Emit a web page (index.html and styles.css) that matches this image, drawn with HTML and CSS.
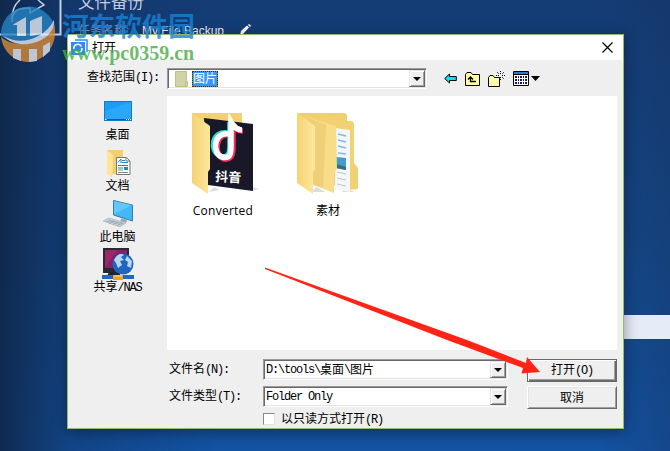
FILE: index.html
```html
<!DOCTYPE html>
<html lang="zh-CN">
<head>
    <meta charset="UTF-8">
    <meta name="viewport" content="width=device-width, initial-scale=1.0">
    <link rel="stylesheet" href="styles.css">
    <title>打开</title>
</head>
<body>
    <div class="app-header">
        <div class="app-icon">
            <svg width="62" height="36" viewBox="0 0 62 36" fill="none" stroke="#c3d0e2">
                <path d="M0 34.5H60.500V0" stroke-width="2"/>
                <path d="M12 22C12 11 17 8 30 8V13L44 5 38 0M20 0C15 4 12 9 12 19" stroke-width="1.5"/>
            </svg>
        </div>
        <div class="app-info">
            <div class="app-title">文件备份</div>
            <div class="task"><span class="task-label">任务名称:</span><span class="task-name">My File Backup</span>
                <svg class="pencil" width="11" height="11" viewBox="0 0 11 11"><path d="M0 11L1 7 7 1.500 9 3.500 3 10ZM8 1L9 0 11 1.500 10 3Z" fill="#fff"/></svg>
            </div>
        </div>
    </div>
    <div class="strip"></div>

    <div class="dialog">
        <div class="titlebar">
            <svg width="17" height="17" viewBox="0 0 17 17">
                <path d="M4 1H16V13" fill="none" stroke="#2d8cf0" stroke-width="1.5"/>
                <rect x="0" y="3" width="14" height="13" fill="#2d8cf0"/>
                <path d="M3 10A4 4 0 0 1 10.500 7.500M11 9A4 4 0 0 1 4 12" fill="none" stroke="#fff" stroke-width="1.500"/>
            </svg>
            <span class="title">打开</span>
            <svg class="close" width="11" height="11" viewBox="0 0 11 11"><path d="M.5.5L10.500 10.500M10.500.5L.5 10.500" stroke="#000" stroke-width="1.200"/></svg>
        </div>

        <div class="lookin">
            <span class="lookin-label">查找范围<span class="en">(I):</span></span>
            <div class="combo folder-combo">
                <svg width="13" height="16" viewBox="0 0 13 16"><path d="M.5.5H11.500V9.500L12.500 11V15.500H.5Z" fill="#d0d3a5" stroke="#c3c27c"/><path d="M10.500 15V10" stroke="#c3c27c"/></svg>
                <span class="selected">图片</span>
                <span class="drop"></span>
            </div>
            <div class="tools">
                <svg width="13" height="11" viewBox="0 0 13 11"><path d="M.7 5.500L5.500 1V3.500H12.300V7.500H5.500V10Z" fill="#00e5ee" stroke="#000"/></svg>
                <svg width="15" height="14" viewBox="0 0 15 14"><path d="M.5 13V2.500L2 .5H6L7.500 2.500H14.500V13.500H.5Z" fill="#ffffa5" stroke="#000"/><path d="M5.500 5V9.500H11M3 7.500L5.500 5 8 7.500" fill="none" stroke="#000" stroke-width="1.300"/></svg>
                <svg width="17" height="16" viewBox="0 0 17 16"><path d="M.5 15V6.500L2 4.500H5L6.500 6.500H11.500V15.500H.5Z" fill="#ffffa5" stroke="#000"/><path d="M12.500 0V3M12.500 6V9M8 4.500H11M14 4.500H17M9 1L11 3M14 6L16 8M16 1L14 3M11 6L10 7" stroke="#000" stroke-dasharray="1 1"/></svg>
                <svg width="27" height="15" viewBox="0 0 27 15"><path d="M.5.5H15.500V14.500H.5Z" fill="#fff" stroke="#000"/><path d="M1 2H15" stroke="#2d79cf" stroke-width="2"/><path d="M1 3.500H15" stroke="#000"/><path d="M2 6H14M2 9H14M2 12H14" stroke="#111a55" stroke-width="2" stroke-dasharray="2 1 1 1"/><path d="M18 5H27L22.500 10Z"/></svg>
            </div>
        </div>

        <div class="main">
            <div class="places">
                <div class="place">
                    <svg width="28" height="20" viewBox="0 0 28 20"><rect x=".5" y=".5" width="27" height="19" fill="#1b9cf5" stroke="#137bc4"/><path d="M1 18V10L27 1V18Z" fill="#35adff" opacity=".6"/><path d="M1 18.500H27" stroke="#075d99"/><path d="M1 18.500H2.500M22 18.500H23M24 18.500H25M26 18.500H27" stroke="#fff"/></svg>
                    <span>桌面</span>
                </div>
                <div class="place">
                    <svg width="28" height="27" viewBox="0 0 28 27"><path d="M3 0H19V24H3Z" fill="#f3cf70"/><path d="M3 0L9 5V15L8 27 3 24Z" fill="#ffe493"/><path d="M12.500 7.500H22.500L26 11V24.500H12.500Z" fill="#fff" stroke="#777"/><path d="M22 8V11H26" fill="none" stroke="#777"/><path d="M14 12.500L17 9V13M18 10.500H21M18 12.500H24M14 15.500H24M14 18H19" stroke="#2587bd" fill="none"/><path d="M14 20H19M14 22.500H24" stroke="#888"/><path d="M20 17H24V20H20Z" fill="#268ab6"/></svg>
                    <span>文档</span>
                </div>
                <div class="place">
                    <svg width="32" height="28" viewBox="0 0 32 28"><path d="M11.500.5L30.500 5V21L11.500 15Z" fill="#42b8f7" stroke="#347ea8"/><path d="M12 1L30 5 12 14Z" fill="#7ad1ff" opacity=".6"/><path d="M20 18L25 20 24 23 18 21Z" fill="#9caab5"/><path d="M1 21L7 18 24 23 18 27Z" fill="#ccd4db" stroke="#a6afb7" stroke-width=".6"/><path d="M4 21L20 25M6 20L22 24M7 24L12 20M11 25L16 21M15 26L20 22" stroke="#8f9aa3" stroke-width=".6"/></svg>
                    <span>此电脑</span>
                </div>
                <div class="place">
                    <svg width="32" height="32" viewBox="0 0 32 32"><path d="M1 0H27V25H1Z" fill="#292934"/><path d="M3 2H25V20H3Z" fill="#83206f"/><path d="M3 2H15L3 20Z" fill="#b3305d" opacity=".5"/><path d="M7 24H18V28H5Z" fill="#24252c"/><circle cx="21" cy="16" r="10.500" fill="#2165c0"/><path d="M12 12C15 6 19 5 22 7L19 9 22 12 18 13 20 17 16 20 14 15ZM25 8L30 13 29 20 25 18 26 14 23 12Z" fill="#b6d7f0"/><path d="M0 27H32V31H0Z" fill="#2169bf"/><path d="M11 27H21V32H11Z" fill="#eba51a"/><path d="M12 28H20" stroke="#ffe27b"/></svg>
                    <span>共享<span class="en">/NAS</span></span>
                </div>
            </div>

            <div class="files">
                <div class="file">
                    <svg width="68" height="84" viewBox="0 0 68 84">
                        <defs><linearGradient id="fold" x2="1"><stop stop-color="#f5d375"/><stop offset="1" stop-color="#ffe79d"/></linearGradient></defs>
                        <path d="M58 79L67 77 58 74Z" fill="#ddd"/><path d="M17 80L22 75 28 78Z" fill="#ddd"/>
                        <path d="M0 1H50V60H0Z" fill="#f3d071"/>
                        <path d="M12 6L61 12V79L16 73Z" fill="#181828"/>
                        <g fill="none" stroke-width="5.500">
                            <path d="M36 21C20 18 17 39 28 44C36 47 38 41 38 34V10C40 15 43 17 48 17" stroke="#25e0da"/>
                            <path d="M38 23C23 20 21 43 32 47C39 48 41 43 41 36V12C43 16 46 19 51 19" stroke="#f42e55"/>
                            <path d="M37 22C21 19 20 42 30 45C38 47 39 42 39 35V10C42 15 45 18 50 18" stroke="#fff"/>
                        </g>
                        <text class="cover" x="23" y="69" transform="rotate(3 23 69)">抖音</text>
                        <path d="M0 1L18 14V57L16 60V82L0 71Z" fill="url(#fold)"/>
                    </svg>
                    <span class="file-name latin">Converted</span>
                </div>
                <div class="file">
                    <svg width="68" height="84" viewBox="0 0 68 84">
                        <path d="M13 80L20 75 28 80ZM45 80L49 75 57 80Z" fill="#ddd"/>
                        <path d="M0 1H48L50 3V70H0Z" fill="#efcf70"/><path d="M10 5L49 9H55L57 11V51L61 56V77L49 78 12 64Z" fill="#f1d171"/>
                        <path d="M38 16L53 18V80L38 77Z" fill="#f4f6f8"/>
                        <path d="M41 22L49 24M41 28L49 30M41 34L49 36M41 41L49 42" stroke="#79bfe7" stroke-width="1.500"/><path d="M39 45L49 46V58L39 56Z" fill="#449ccc"/><path d="M39 52L49 55V58L39 56Z" fill="#376e73"/><path d="M40 60L49 62M40 66L49 68M40 72L49 74" stroke="#bcc4cb"/>
                        <path d="M7 4L39 14 40 57 37 61V81L14 72Z" fill="#f8dc88"/><path d="M7 4L29 13 26 76 14 72Z" fill="#e8c66c" opacity=".55"/>
                        <path d="M0 1L18 14V57L16 60V82L0 71Z" fill="url(#fold)"/>
                    </svg>
                    <span class="file-name">素材</span>
                </div>
            </div>
        </div>

        <div class="fields">
            <div class="inputs">
                <div class="row">
                    <span class="field-label">文件名<span class="en">(N):</span></span>
                    <div class="combo"><span class="en">D:\tools\</span>桌面<span class="en">\</span>图片<span class="drop"></span></div>
                </div>
                <div class="row type-row">
                    <span class="field-label">文件类型<span class="en">(T):</span></span>
                    <div class="combo"><span class="en">Folder Only</span><span class="drop"></span></div>
                </div>
                <div class="readonly"><span class="box"></span><span>以只读方式打开<span class="en">(R)</span></span></div>
            </div>
            <div class="buttons">
                <button class="default">打开<span class="en">(O)</span></button>
                <button>取消</button>
            </div>
        </div>
    </div>

    <svg class="arrow" width="670" height="451" viewBox="0 0 670 451"><path d="M265 267.500L467 340 526 363 527 357 540 372 521.500 373.500 523 368 447 340 265 269Z" fill="#ff2415"/></svg>

    <div class="watermark">
        <svg width="58" height="64" viewBox="0 0 58 64">
            <path d="M1 36A27.500 27.500 0 0 1 54 24C48 44 16 48 1 36Z" fill="#2684c4"/>
            <path d="M1 37C15 49 43 46 54 23C59 42 47 61 28 62C13 61 3 51 1 37Z" fill="#d98b38"/>
            <path d="M54 20C56 42 18 53 4 36C18 46 44 40 54 20Z" fill="#e3edf5"/>
            <path d="M14 24L26 17V36H17V25H13ZM30 21L42 16V34L30 36Z" fill="#e3edf5"/>
            <path d="M13 49H21V61L13 58ZM29 49H37V61L29 62ZM43 46L50 42V51L43 57Z" fill="#e9edf0"/>
        </svg>
        <div class="mark-text">
            <div class="mark-name">河东软件园</div>
            <div class="mark-url">www.pc0359.cn</div>
        </div>
    </div>
</body>
</html>
```

FILE: styles.css
```css
* {
    box-sizing: border-box;
}

body {
    margin: 0;
    width: 670px;
    height: 451px;
    overflow: hidden;
    position: relative;
    font: 12px/14px "Liberation Sans", "Noto Sans CJK SC", sans-serif;
    color: #000;
    background: linear-gradient(90deg, rgba(16, 40, 75, .95) 0, rgba(16, 48, 95, .4) 70px, transparent 220px, transparent 600px, rgba(22, 50, 95, .35) 670px), linear-gradient(#143c75, #144685 50%, #1353a3);
}

svg {
    display: block;
    flex: none;
}

.en {
    font-family: "Liberation Mono", monospace;
    font-size: 12px;
    letter-spacing: -1.2px;
}

/* application behind the dialog */
.app-header {
    display: flex;
    gap: 16px;
    height: 36px;
    color: #c3cee0;
}

.app-info {
    display: flex;
    flex-direction: column;
    justify-content: space-between;
}

.app-title {
    font-size: 16.5px;
    line-height: 20px;
    margin-top: -8px;
}

.task {
    display: flex;
    line-height: 14px;
    height: 12px;
}

.task-label {
    width: 64px;
    color: #8394b2;
}

.task-name {
    width: 98px;
    color: #eee;
}

.strip {
    position: absolute;
    left: 610px;
    top: 315px;
    width: 60px;
    height: 24px;
    background: #e6ecf7;
}

.dialog {
    position: absolute;
    left: 67px;
    top: 34px;
    width: 557px;
    height: 395px;
    border: 1px solid #9aba68;
    background: #efefef;
    box-shadow: 0 3px 14px rgba(0, 0, 0, .4);
}

.titlebar {
    display: flex;
    align-items: center;
    height: 25px;
    padding: 0 10px 0 3px;
    background: #fff;
}

.title {
    margin-left: 4px;
}

.close {
    margin-left: auto;
}

.lookin {
    display: flex;
    height: 36px;
    padding: 8px 0 0 19px;
}

.lookin-label {
    width: 80px;
    line-height: 18px;
}

.combo {
    display: flex;
    align-items: center;
    width: 245px;
    height: 21px;
    padding: 0 1px 0 2px;
    background: #fff;
    border: 1px solid;
    border-color: #999 #fff #fff #999;
    box-shadow: inset 1px 1px #696969, inset -1px -1px #e3e3e3;
}

.folder-combo {
    width: 260px;
    padding-left: 7px;
}

.selected {
    width: 26px;
    height: 16px;
    margin-left: 4px;
    line-height: 14px;
    text-align: center;
    color: #fff;
    background: #3399ff;
    border: 1px dotted #542800;
}

.drop {
    display: flex;
    align-items: center;
    justify-content: center;
    width: 16px;
    height: 17px;
    margin-left: auto;
    background: #efefef;
    border: 1px solid;
    border-color: #e3e3e3 #696969 #696969 #e3e3e3;
    box-shadow: inset 1px 1px #fff, inset -1px -1px #a0a0a0;
}

.drop::after {
    content: "";
    border: 4px solid transparent;
    border-top-color: #000;
    border-bottom: 0;
}

.tools {
    display: flex;
    align-items: center;
    gap: 8px;
    height: 21px;
    margin-left: 17px;
}

.main {
    display: flex;
    height: 254px;
}

.places {
    display: flex;
    flex-direction: column;
    width: 99px;
    padding-top: 1px;
}

.place {
    display: flex;
    flex-direction: column;
    align-items: center;
    justify-content: flex-end;
    gap: 2px;
    height: 51px;
}

.place:first-child {
    height: 45px;
    gap: 7px;
}

.place:last-child {
    gap: 0;
}

.files {
    display: flex;
    width: 450px;
    padding: 16px 0 0 22px;
    background: #fff;
}

.file {
    width: 105px;
    padding-left: 3px;
}

.file-name {
    display: block;
    width: 68px;
    margin: 8px 0 0 -3px;
    text-align: center;
}

.latin {
    font-family: "Open Sans", sans-serif;
    letter-spacing: .25px;
}

.cover {
    font: bold 13px "Noto Sans CJK SC", sans-serif;
    fill: #fff;
}

.fields {
    display: flex;
    padding: 9px 0 0 101px;
}

.inputs {
    width: 358px;
}

.row {
    display: flex;
    align-items: center;
    height: 21px;
}

.type-row {
    margin-top: 6px;
}

.field-label {
    width: 94px;
}

.readonly {
    display: flex;
    align-items: center;
    gap: 6px;
    height: 14px;
    margin: 5px 0 0 94px;
}

.box {
    width: 12px;
    height: 12px;
    background: #fff;
    border: 1px solid;
    border-color: #888 #e3e3e3 #e3e3e3 #888;
}

.buttons {
    display: flex;
    flex-direction: column;
    gap: 4px;
}

button {
    width: 90px;
    height: 23px;
    padding: 0;
    font: inherit;
    color: #000;
    background: #efefef;
    border: 1px solid;
    border-color: #fff #696969 #696969 #fff;
    box-shadow: inset 1px 1px #e3e3e3, inset -1px -1px #a0a0a0;
}

.default {
    border-color: #696969;
    box-shadow: inset 1px 1px #fff, inset -1px -1px #696969, inset -2px -2px #a0a0a0;
}

.arrow {
    position: absolute;
    left: 0;
    top: 0;
}

.watermark {
    position: absolute;
    left: 0;
    top: 0;
    display: flex;
    gap: 4px;
    opacity: .8;
}

.mark-name {
    margin-top: 8px;
    font: bold 26.6px/34px "Noto Sans CJK SC", sans-serif;
    color: #1682d4;
}

.mark-url {
    font: bold 20px/22px "Liberation Serif", serif;
    color: #48ac48;
}
```
